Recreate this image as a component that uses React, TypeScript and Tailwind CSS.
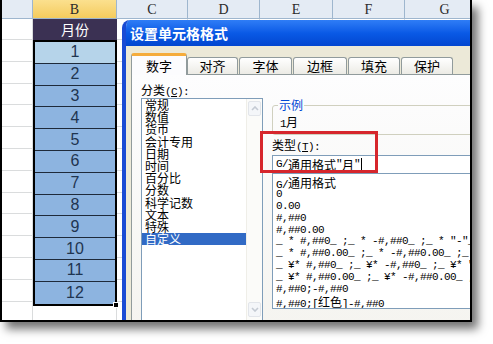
import React from 'react';

const CJK = "font-['Noto_Sans_CJK_SC',sans-serif]";
const MONO = "font-['Liberation_Mono','Noto_Sans_CJK_SC',monospace] text-[11px] tracking-[-0.6px]";

const categories = ['常规', '数值', '货币', '会计专用', '日期', '时间', '百分比', '分数', '科学记数', '文本', '特殊', '自定义'];

const formats = [
  'G/通用格式',
  '0',
  '0.00',
  '#,##0',
  '#,##0.00',
  '_ * #,##0_ ;_ * -#,##0_ ;_ * "-"_ ;_ @_ ',
  '_ * #,##0.00_ ;_ * -#,##0.00_ ;_ * "-"??_ ;_ @_ ',
  '_ ¥* #,##0_ ;_ ¥* -#,##0_ ;_ ¥* "-"_ ;_ @_ ',
  '_ ¥* #,##0.00_ ;_ ¥* -#,##0.00_ ;_ ¥* "-"??_ ;_ @_ ',
  '#,##0;-#,##0',
  '#,##0;[红色]-#,##0',
];

const tabs = [
  { label: '对齐', cls: 'w-[51px]' },
  { label: '字体', cls: 'w-[53px] ml-[1px]' },
  { label: '边框', cls: 'w-[54px] ml-[1px]' },
  { label: '填充', cls: 'w-[52px] ml-[1px]' },
  { label: '保护', cls: 'w-[52px] ml-[1px]' },
];

// ASCII runs in a half-width mono face, CJK runs at full 12px
function Mixed({ text }: { text: string }) {
  const parts = text.split(/([\u2E80-\uFFFF]+)/);
  return (
    <>
      {parts.map((p, i) =>
        /[\u2E80-\uFFFF]/.test(p) ? (
          <span key={i} className={`${CJK} text-[12px] tracking-normal`}>{p}</span>
        ) : (
          <span key={i}>{p}</span>
        )
      )}
    </>
  );
}

function ColHeader({ label, className }: { label: string; className: string }) {
  return (
    <div
      className={`h-[19px] shrink-0 flex items-center justify-center border-b border-r border-[#9eb6ce] font-['Liberation_Serif',serif] text-[14px] text-[#2a2a2a] ${className}`}
    >
      {label}
    </div>
  );
}

function GridCol({ label, width }: { label: string; width: string }) {
  return (
    <div className={`flex flex-col shrink-0 ${width}`}>
      <ColHeader label={label} className="bg-[#e4ebf4]" />
      <div className="h-[21px] shrink-0 border-b border-r border-[#dadcdd]" />
      {Array.from({ length: 12 }).map((_, i) => (
        <div key={i} className="h-[21.8px] shrink-0 border-b border-r border-[#dadcdd]" />
      ))}
      <div className="flex-1 border-r border-[#dadcdd]" />
    </div>
  );
}

function ScrollArrow({ up }: { up?: boolean }) {
  return (
    <div className="h-[15px] shrink-0 rounded-[2px] border border-[#e2e5ea] bg-[#f4f6f9] flex items-center justify-center">
      <svg width="8" height="5" viewBox="0 0 8 5">
        <path d={up ? 'M1 4 L4 1 L7 4' : 'M1 1 L4 4 L7 1'} fill="none" stroke="#c4cad3" strokeWidth="1.6" />
      </svg>
    </div>
  );
}

export default function App() {
  return (
    <div className="w-[493px] h-[344px] bg-white overflow-hidden">
      <div className="relative w-[472px] h-[322px] border-x-2 border-b-2 border-black overflow-hidden bg-white shadow-[6px_7px_9px_rgba(0,0,0,0.55)]">
        {/* Sheet */}
        <div className="flex h-full">
          <GridCol label="" width="w-[31px]" />

          {/* Column B */}
          <div className="flex flex-col shrink-0 w-[84px]">
            <ColHeader label="B" className="bg-linear-to-b from-[#fbe08e] to-[#f4cb5c]" />
            <div className={`h-[21px] shrink-0 bg-[#3b3153] text-white flex items-center justify-center text-[14px] ${CJK}`}>
              月份
            </div>
            <div className="relative border-2 border-black flex flex-col">
              {Array.from({ length: 12 }).map((_, i) => (
                <div
                  key={i}
                  className={`h-[21.8px] shrink-0 flex items-center justify-center font-['Liberation_Sans',sans-serif] text-[16px] text-[#1f3550] ${
                    i === 0 ? 'bg-[#b6d4ea]' : 'bg-[#8db4e0]'
                  } ${i < 11 ? 'border-b border-[#1e2a3a]' : ''}`}
                >
                  {i + 1}
                </div>
              ))}
              <div className="absolute -right-[4px] -bottom-[4px] w-[6px] h-[6px] bg-black border border-white" />
            </div>
            <div className="flex-1 border-r border-[#dadcdd]" />
          </div>

          <GridCol label="C" width="w-[71px]" />
          <GridCol label="D" width="w-[72px]" />
          <GridCol label="E" width="w-[73px]" />
          <GridCol label="F" width="w-[72px]" />
          <GridCol label="G" width="w-[80px]" />
        </div>

        {/* Format Cells dialog */}
        <div className="absolute left-[120px] top-[20px] w-[420px] h-[340px] flex flex-col rounded-tl-[8px] overflow-hidden bg-[#ece9d8] border-l-[4px] border-[#1a4bd4]">
          <div className="h-[26px] shrink-0 flex items-center pl-[4px] bg-linear-to-b from-[#2f7df6] via-[#0a5ae6] to-[#0346d0]">
            <span className={`${CJK} text-[14px] font-bold text-white`}>设置单元格格式</span>
          </div>

          <div className="flex-1 flex flex-col pl-[5px] pt-[7px]">
            {/* Tabs */}
            <div className={`flex items-end h-[21px] shrink-0 ${CJK} text-[13px] text-black`}>
              <div className="relative z-10 -mb-[1px] w-[56px] h-[22px] bg-[#fcfcfe] border-x border-[#919b9c] border-t-[3px] border-t-[#f5ac3c] rounded-t-[3px] flex items-center justify-center">
                数字
              </div>
              {tabs.map((t) => (
                <div
                  key={t.label}
                  className={`h-[17px] border border-b-0 border-[#919b9c] rounded-t-[3px] bg-linear-to-b from-white to-[#ecebe5] flex items-center justify-center ${t.cls}`}
                >
                  {t.label}
                </div>
              ))}
            </div>

            {/* Panel */}
            <div className="flex-1 flex border border-[#919b9c] bg-linear-to-b from-[#fdfdfe] to-[#f4f3ee] pl-[9px] pt-[7px]">
              {/* Category */}
              <div className="w-[122px] shrink-0 flex flex-col">
                <div className={`h-[16px] leading-[16px] ${MONO} text-black`}>
                  <Mixed text="分类" />(<u>C</u>):
                </div>
                <div className="h-[226px] flex border border-[#7f9db9] bg-white">
                  <div className={`flex-1 flex flex-col ${CJK} text-[12px]`}>
                    {categories.map((c, i) => (
                      <div
                        key={c}
                        className={`h-[12.2px] leading-[12.2px] pl-[3px] whitespace-nowrap ${
                          i === 11 ? 'bg-[#316ac5] text-white' : 'text-black'
                        }`}
                      >
                        {c}
                      </div>
                    ))}
                  </div>
                  <div className="w-[16px] shrink-0 flex flex-col justify-between p-[1px] pt-[2px] pb-[6px] border-l border-[#efeee8] bg-[#fbfbf9]">
                    <ScrollArrow up />
                    <ScrollArrow />
                  </div>
                </div>
              </div>

              {/* Sample / type */}
              <div className="ml-[9px] flex-1 flex flex-col">
                <fieldset className="mt-[16px] border border-[#d0d0bf] rounded-[3px]">
                  <legend className={`ml-[5px] px-[1px] leading-[14px] ${CJK} text-[12px] text-[#0046d5]`}>示例</legend>
                  <div className={`pl-[7px] pt-[3px] pb-[3px] leading-[14px] ${MONO} text-black`}>
                    <Mixed text="1月" />
                  </div>
                </fieldset>

                <div className={`mt-[3px] leading-[14px] ${MONO} text-black`}>
                  <Mixed text="类型" />(<u>T</u>):
                </div>

                <div className={`mt-[1px] h-[19px] shrink-0 flex items-center pl-[3px] border border-[#7f9db9] bg-white ${MONO} text-black whitespace-pre`}>
                  <Mixed text={'G/通用格式"月"'} />
                  <span className="ml-[1px] w-[1px] h-[13px] bg-black" />
                </div>

                <div className={`h-[135px] shrink-0 overflow-hidden border border-t-0 border-[#7f9db9] bg-white pt-[3px] pl-[3px] ${MONO} text-black`}>
                  {formats.map((f) => (
                    <div key={f} className="h-[11.9px] leading-[11.9px] whitespace-pre">
                      <Mixed text={f} />
                    </div>
                  ))}
                </div>
              </div>
            </div>
          </div>
        </div>

        {/* Red highlight */}
        <div className="absolute left-[258px] top-[131px] w-[118px] h-[42px] border-[3px] border-[#d6262c]" />
      </div>
    </div>
  );
}
